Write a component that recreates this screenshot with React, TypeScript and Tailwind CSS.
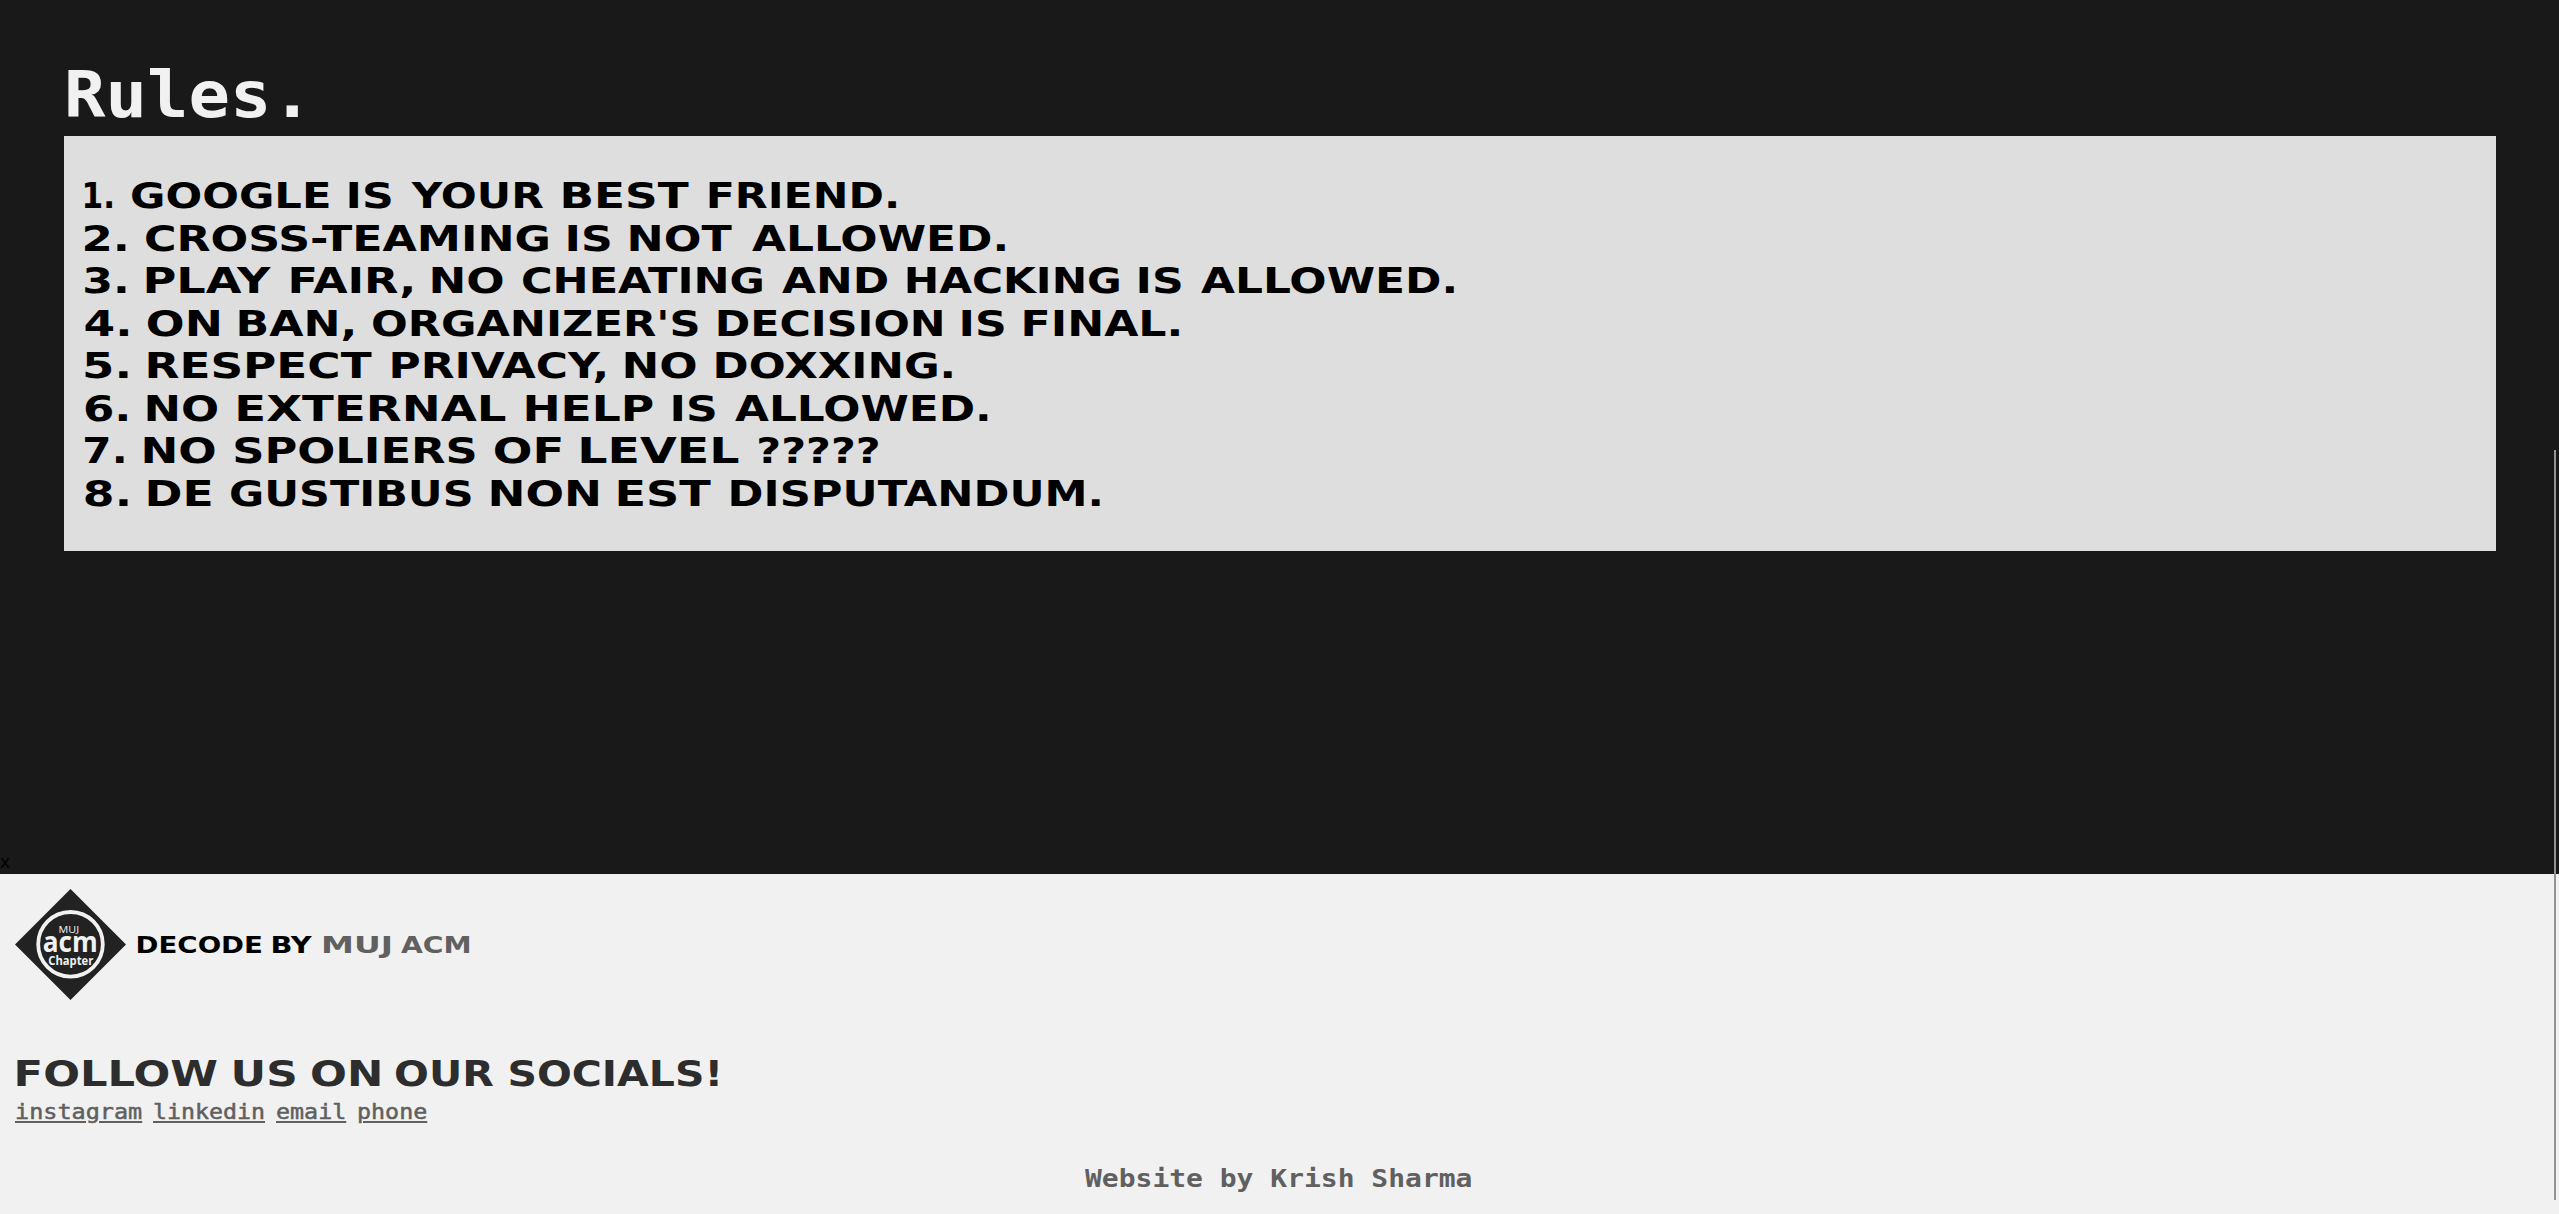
import { useLayoutEffect, useRef } from "react";

type FitProps = { text: string; width: number; ink?: boolean; className?: string };

/*
 * A single run of text stretched horizontally to a fixed width. With `ink`,
 * the drawn glyphs (without their side bearings) fill the width.
 */
function Fit({ text, width, ink = false, className = "" }: FitProps) {
  const ref = useRef<HTMLSpanElement>(null);
  useLayoutEffect(() => {
    const el = ref.current;
    if (!el) return;
    const ctx = ink ? document.createElement("canvas").getContext("2d") : null;
    if (ctx) {
      // Measured at ten times the size, since glyph bounds are rounded to whole pixels.
      const s = getComputedStyle(el);
      ctx.font = `${s.fontWeight} ${parseFloat(s.fontSize) * 10}px ${s.fontFamily}`;
      const m = ctx.measureText(text);
      const left = -m.actualBoundingBoxLeft / 10;
      const scale = width / (m.actualBoundingBoxRight / 10 - left);
      el.style.transform = `scaleX(${scale}) translateX(${-left}px)`;
    } else {
      el.style.transform = `scaleX(${width / el.offsetWidth})`;
    }
  }, [text, width, ink]);
  return (
    <span className="block" style={{ width }}>
      <span ref={ref} className={`inline-block origin-left whitespace-nowrap align-top ${className}`}>
        {text}
      </span>
    </span>
  );
}

type Word = [text: string, width: number];

const rules: Word[][] = [
  [["1.", 27], ["GOOGLE", 197], ["IS", 42], ["YOUR", 132], ["BEST", 126], ["FRIEND.", 187]],
  [["2.", 40.5], ["CROSS-TEAMING", 402], ["IS", 42], ["NOT", 102], ["ALLOWED.", 253]],
  [
    ["3.", 40.5], ["PLAY", 125], ["FAIR,", 121], ["NO", 71], ["CHEATING", 239],
    ["AND", 105], ["HACKING", 212], ["IS", 42], ["ALLOWED.", 253],
  ],
  [["4.", 43], ["ON", 71], ["BAN,", 114], ["ORGANIZER'S", 325], ["DECISION", 224], ["IS", 42], ["FINAL.", 155]],
  [["5.", 42.5], ["RESPECT", 224], ["PRIVACY,", 213], ["NO", 71], ["DOXXING.", 236]],
  [["6.", 42], ["NO", 70.5], ["EXTERNAL", 268], ["HELP", 127], ["IS", 42], ["ALLOWED.", 252.5]],
  [["7.", 38.5], ["NO", 71], ["SPOLIERS", 240], ["OF", 66], ["LEVEL", 158], ["?????", 119]],
  [["8.", 42.5], ["DE", 63], ["GUSTIBUS", 240], ["NON", 107], ["EST", 93], ["DISPUTANDUM.", 369]],
];

const follow: Word[] = [["FOLLOW", 200], ["US", 61], ["ON", 67.5], ["OUR", 97], ["SOCIALS!", 208]];

const socials: Word[] = [["instagram", 127], ["linkedin", 112], ["email", 70], ["phone", 70]];

const wide = "font-['DejaVu_Sans',sans-serif] font-bold";
const mono = "font-['DejaVu_Sans_Mono',monospace]";

function AcmLogo() {
  return (
    <svg width="111" height="111" viewBox="0 0 111 111" className="block shrink-0">
      <path d="M55.5 0 111 55.5 55.5 111 0 55.5Z" fill="#222" />
      <circle cx="55.5" cy="55.3" r="32.3" fill="none" stroke="#f1f1f1" strokeWidth="3.8" />
      <g fill="#f1f1f1" textAnchor="middle" fontFamily="Open Sans, sans-serif">
        <text x="53.8" y="44" fontSize="9.4" textLength="20.5" lengthAdjust="spacingAndGlyphs">MUJ</text>
        <text x="55.3" y="62.7" fontSize="28" fontWeight="700" textLength="55" lengthAdjust="spacingAndGlyphs">acm</text>
        <text x="55.8" y="75.7" fontSize="12.4" fontWeight="700" textLength="45" lengthAdjust="spacingAndGlyphs">Chapter</text>
      </g>
    </svg>
  );
}

export default function App() {
  return (
    <div className="relative flex h-[1214px] w-full flex-col overflow-hidden bg-[#191919]">
      <main className="flex h-[874px] flex-col">
        <section className="pr-[63px] pl-16 pt-[60px]">
          <h1 className="h-[76px] text-[#f1f1f1]">
            <Fit text="Rules." width={249} className={`text-[64.5px] leading-[70px] font-bold ${mono}`} />
          </h1>
          <ol className="h-[415px] bg-[#dedede] pt-[39px] pl-[21px] text-black">
            {rules.map((words, i) => (
              <li key={i} className="flex h-[42.5px] gap-[20px]">
                {words.map(([text, width]) => (
                  <Fit key={text} text={text} width={width} ink className={`text-[35.6px] leading-[42.5px] ${wide}`} />
                ))}
              </li>
            ))}
          </ol>
        </section>
        <p className="mt-auto h-[25px] font-['Open_Sans',sans-serif] text-[19px] leading-[24px] text-black">x</p>
      </main>
      <footer className="flex h-[340px] flex-col bg-[#f1f1f1] pt-[15px] pl-[15px]">
        <div className="flex items-center">
          <AcmLogo />
          <div className={`ml-3 flex gap-[11.8px] text-[23.5px] leading-[30px] text-black ${wide}`}>
            <Fit text="DECODE" width={123} ink />
            <Fit text="BY" width={39} ink />
            <div className="flex gap-[11.8px] text-[#606060]">
              <Fit text="MUJ" width={66} ink />
              <Fit text="ACM" width={68} ink />
            </div>
          </div>
        </div>
        <h2 className="mt-[51px] ml-[1.5px] flex h-[46px] gap-[17px] text-[#2d2d2d]">
          {follow.map(([text, width]) => (
            <Fit key={text} text={text} width={width} ink className={`text-[35.6px] leading-[46px] ${wide}`} />
          ))}
        </h2>
        <nav className="mt-px flex gap-[11px] text-[#606060]">
          {socials.map(([text, width]) => (
            <a key={text} href="#" className="block h-[28px]">
              <Fit
                text={text}
                width={width}
                className={`text-[22px] leading-[28px] underline decoration-2 underline-offset-2 [-webkit-text-stroke:0.5px_#606060] ${mono}`}
              />
            </a>
          ))}
        </nav>
        <p className="mt-[36px] ml-[1070px] text-[#606060]">
          <Fit text="Website by Krish Sharma" width={387} className={`text-[25.6px] leading-[32px] font-bold ${mono}`} />
        </p>
      </footer>
      <div className="absolute top-[450px] left-[2554px] h-[750px] w-[2px] bg-[#949494]" />
    </div>
  );
}
